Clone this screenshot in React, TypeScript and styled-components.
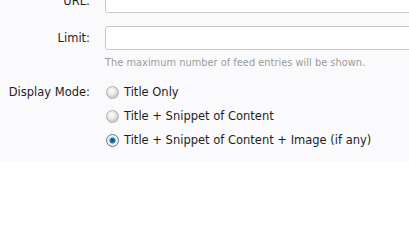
import React from "react";
import styled, { createGlobalStyle } from "styled-components";

const Global = createGlobalStyle`
  html, body { margin: 0; padding: 0; background: #ffffff; }
  body { font-family: Tahoma, "DejaVu Sans", Verdana, sans-serif; }
`;

const Page = styled.div`
  width: 409px;
  height: 214px;
  overflow: hidden;
  background: #ffffff;
`;

const Form = styled.div`
  background: #fafafc;
  margin-top: -11px;
  padding-bottom: 13px;
  display: flex;
  flex-direction: column;
`;

const Row = styled.div<{ $gap?: number }>`
  display: grid;
  grid-template-columns: 90px 1fr;
  column-gap: 15px;
  align-items: start;
  margin-bottom: ${(p) => p.$gap ?? 0}px;
`;

const Label = styled.div<{ $pt: number }>`
  text-align: right;
  font-size: 11.5px;
  color: #1e1e1e;
  padding-top: ${(p) => p.$pt}px;
  white-space: nowrap;
`;

const Field = styled.div`
  display: flex;
  flex-direction: column;
`;

const Input = styled.div`
  height: 22px;
  width: 320px;
  border: 1px solid #c9c9c9;
  border-radius: 3px;
  background: #ffffff;
`;

const Hint = styled.div`
  font-size: 9.85px;
  color: #9a9a9a;
  margin-top: 7px;
`;

const Options = styled.div`
  display: flex;
  flex-direction: column;
  gap: 8px;
  padding-top: 2px;
`;

const Option = styled.label`
  display: flex;
  align-items: center;
  gap: 5px;
  font-size: 11.5px;
  color: #1e1e1e;
  height: 16px;
`;

const Radio = styled.span<{ $checked?: boolean }>`
  width: 11px;
  height: 11px;
  border-radius: 50%;
  border: 1px solid ${(p) => (p.$checked ? "#5b7a90" : "#b0b0b0")};
  background: ${(p) =>
    p.$checked
      ? "radial-gradient(circle, #0d4a66 0, #2b7ea3 2.5px, #dfe9ee 3.5px, #f4f7f9 6px)"
      : "radial-gradient(circle at 40% 35%, #ffffff 0, #e8e8e8 4px, #d0d0d0 6px)"};
  margin-left: 1px;
  flex: none;
`;

const options = [
  "Title Only",
  "Title + Snippet of Content",
  "Title + Snippet of Content + Image (if any)",
];

export default function App() {
  return (
    <Page>
      <Global />
      <Form>
        <Row $gap={13}>
          <Label $pt={5}>URL:</Label>
          <Field>
            <Input />
          </Field>
        </Row>
        <Row $gap={14}>
          <Label $pt={5}>Limit:</Label>
          <Field>
            <Input />
            <Hint>The maximum number of feed entries will be shown.</Hint>
          </Field>
        </Row>
        <Row>
          <Label $pt={3}>Display Mode:</Label>
          <Options>
            {options.map((o, i) => (
              <Option key={o}>
                <Radio $checked={i === 2} />
                {o}
              </Option>
            ))}
          </Options>
        </Row>
      </Form>
    </Page>
  );
}
